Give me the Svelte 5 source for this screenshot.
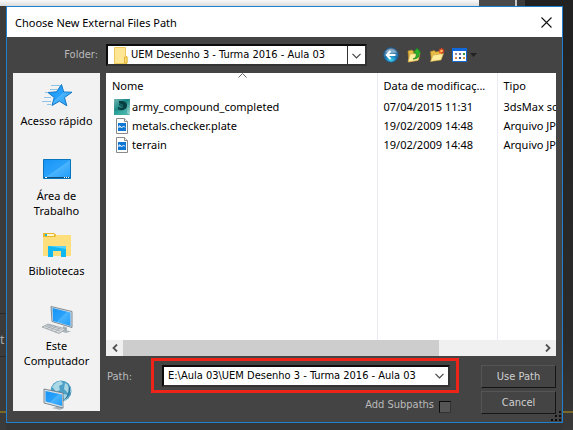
<script>
  const places = [
    { id: 'quick', label: 'Acesso rápido' },
    { id: 'desktop', label: 'Área de Trabalho' },
    { id: 'libraries', label: 'Bibliotecas' },
    { id: 'computer', label: 'Este Computador' },
    { id: 'network', label: '' }
  ];
  const files = [
    { name: 'army_compound_completed', date: '07/04/2015 11:31', type: '3dsMax scene', kind: 'max' },
    { name: 'metals.checker.plate', date: '19/02/2009 14:48', type: 'Arquivo JPG', kind: 'image' },
    { name: 'terrain', date: '19/02/2009 14:48', type: 'Arquivo JPG', kind: 'image' }
  ];
  let path = $state('E:\\Aula 03\\UEM Desenho 3 - Turma 2016 - Aula 03');
  let subpaths = $state(false);
</script>

<div class="desktop">
  <div class="strip"><i class="sheet"></i><i class="bar"></i><i class="edge"></i></div>
  <div class="under left">t</div>
  <div class="under right"></div>

  <div class="dialog" role="dialog" aria-labelledby="title">
    <header>
      <h1 id="title">Choose New External Files Path</h1>
      <button class="close" aria-label="Close">
        <svg width="11" height="11" viewBox="0 0 11 11"><path d="M.5 .5l10 10M10.5 .5l-10 10" stroke="#111" stroke-width="1.1" /></svg>
      </button>
    </header>

    <div class="body">
      <div class="side">
        <label class="folder-label" for="folder">Folder:</label>
        <nav>
          {#each places as place (place.id)}
            <button class="place" aria-label={place.label || place.id}>
              <svg width="32" height="32" viewBox="0 0 32 32" aria-hidden="true">
                <defs>
                  <linearGradient id="g-{place.id}" x1="0" y1="0" x2="1" y2="1">
                    <stop offset="0" stop-color="#1593f5" /><stop offset=".5" stop-color="#2aa2fb" /><stop offset=".52" stop-color="#4ab4ff" /><stop offset="1" stop-color="#1e9bfa" />
                  </linearGradient>
                </defs>
                {#if place.id === 'quick'}
                  <path d="M20.500 5.500l2.200 7.500 8.300.2-7.500 5.300 2.300 8.300-7.300-4.600-7.500 4.300 2.200-8-6.200-5 8.500-.7z" fill="url(#g-quick)" stroke="#1479c9" />
                  <path d="M10 6.500h9M9 10.500h7M4 13.500h3M3 18.500h7M1 22.500h9M6 25.500h4" stroke="#8fc4e6" />
                {:else if place.id === 'desktop'}
                  <path d="M2.500 5.500h27v19h-27z" fill="url(#g-desktop)" stroke="#0875bd" />
                  <path d="M3 23.500h26" stroke="#12517e" />
                  <path d="M4 23.500h2M23 23.500h1M25 23.500h1M27 23.500h1" stroke="#fff" />
                {:else if place.id === 'libraries'}
                  <path d="M2 4h11l2 2h15v21H2z" fill="#fbd765" />
                  <path d="M2 4h11l2 2v3H2z" fill="#e9b82e" />
                  <path d="M4 5h9v2H4z" fill="#fff6d2" /><path d="M4 5h2v2H4z" fill="#16b7d9" />
                  <path d="M2 8h12l2-2h14v21H2z" fill="#ffdf7c" />
                  <path d="M7 17h18v11h-5v-6h-8v6H7z" fill="#10b8f2" />
                  <path d="M7 17h18v3z" fill="#55d2fa" />
                {:else if place.id === 'computer'}
                  <path d="M10 2.500l21 5v16l-20-6z" fill="#d9e0e5" stroke="#64727d" stroke-width=".8" />
                  <path d="M11.500 4L29.500 8.500V22l-17.500-5z" fill="url(#g-computer)" />
                  <path d="M22 22l4 1.500v3l4 1-5 1.500-6-2 3-1z" fill="#aab4bb" />
                  <path d="M1 23l6-3 18 5-7 4.500z" fill="#d6dadd" stroke="#8d969c" stroke-width=".7" />
                  <path d="M4 22l15 5M6 21l15 4.500M6 25l5-4M10 26l5-4M14 28l5-4" stroke="#929ca3" stroke-width=".6" />
                {:else}
                  <circle cx="20" cy="12" r="10.500" fill="#4e9fc5" />
                  <path d="M11 8q4-6 9-6l2 3-4 2 1 4-4 2-2-3zM24 4q6 3 6 9l-3 1-4-4zM22 15l6 1q-2 5-5 6z" fill="#abd8e5" />
                  <path d="M27 5q5 7-1 14l-4 3q8-8 5-17z" fill="#2676a0" />
                  <path d="M14 23l7 2-1 4h3l-4 2-8-2 4-1z" fill="#adb8c0" />
                  <path d="M3 10l19 4v15L3 24z" fill="#dae2e8" stroke="#64727d" stroke-width=".8" />
                  <path d="M4.500 12L21 15.500V27L4.500 22.500z" fill="url(#g-network)" />
                {/if}
              </svg>
              {#if place.label}<span>{place.label}</span>{/if}
            </button>
          {/each}
        </nav>
      </div>

      <div class="main">
        <div class="toolbar">
          <div class="well folder">
            <svg class="folder-icon" width="14" height="17" viewBox="0 0 14 17" aria-hidden="true">
              <path d="M.5 .5h11v9h1.500v7H.5z" fill="#ffe694" stroke="#ecc75a" /><path d="M10.500 10v6h2.500v-6z" fill="#ffdc74" stroke="#e2b63d" />
            </svg>
            <select id="folder"><option>UEM Desenho 3 - Turma 2016 - Aula 03</option></select>
            <svg class="chevron" width="9" height="6" viewBox="0 0 9 6" aria-hidden="true"><path d="M.5 .8l4 4 4-4" fill="none" stroke="#444" stroke-width="1.200" /></svg>
          </div>
          <div class="tools">
            <button aria-label="Back">
              <svg width="16" height="16" viewBox="0 0 16 16">
                <defs><radialGradient id="ball" cx=".5" cy=".85" r=".8"><stop offset="0" stop-color="#3fd3ee" /><stop offset=".5" stop-color="#1975b4" /><stop offset="1" stop-color="#6689a8" /></radialGradient></defs>
                <circle cx="8" cy="8" r="7.300" fill="url(#ball)" stroke="#205782" /><path d="M2.500 5q5-6 11 0-5 3-11 0z" fill="#b4cbdb" opacity=".6" />
                <path d="M12.500 8H4M7.500 4L3.700 8l3.800 4" fill="none" stroke="#fff" stroke-width="2" />
              </svg>
            </button>
            <button aria-label="Up one level">
              <svg width="16" height="16" viewBox="0 0 16 16">
                <path d="M2 4l4-1 1 1.500 6-1v9L3 15z" fill="#e8bd43" stroke="#b8892a" stroke-width=".6" /><path d="M2 15l2-8 10-1-2 7.500z" fill="#ffee9e" stroke="#cba13d" stroke-width=".6" />
                <path d="M7 12q4-1 3-6H7.500L11 1l4 5h-2q1 6-6 6z" fill="#2eb32c" stroke="#187d1c" stroke-width=".7" />
              </svg>
            </button>
            <button aria-label="New folder">
              <svg width="16" height="16" viewBox="0 0 16 16">
                <path d="M1.500 4.500l4-1 1 1.500 6-1v8L2.500 14z" fill="#e8bd43" stroke="#b8892a" stroke-width=".6" /><path d="M1.500 14.500L4 8l10.500-1.500L12 13z" fill="#ffee9e" stroke="#cba13d" stroke-width=".6" />
                <path d="M12.500 1v6M9.500 4h6M10.500 2l4 4M14.500 2l-4 4" stroke="#ec4420" stroke-width="1.100" /><circle cx="12.500" cy="4" r="1.300" fill="#ffc35a" />
              </svg>
            </button>
            <button class="view" aria-label="View menu">
              <svg width="15" height="14" viewBox="0 0 15 14">
                <path d="M.5 .5h14v13H.5z" fill="#fff" stroke="#156bd5" /><path d="M0 0h15v3H0z" fill="#1269dc" />
                <path d="M3 5h2v2H3z" fill="#9689ae" /><path d="M7 5h2v2H7z" fill="#7265a9" /><path d="M11 5h2v2h-2z" fill="#2f9a43" /><path d="M3 9h2v2H3z" fill="#e88351" /><path d="M7 9h2v2H7z" fill="#274e8b" /><path d="M11 9h2v2h-2z" fill="#c79425" />
              </svg>
              <svg width="7" height="4" viewBox="0 0 7 4"><path d="M0 0h7L3.500 4z" fill="#222" /></svg>
            </button>
          </div>
        </div>

        <div class="list">
          <table>
            <colgroup><col class="c-name" /><col class="c-date" /><col /></colgroup>
            <thead>
              <tr><th>Nome</th><th>Data de modificaç...</th><th>Tipo</th></tr>
            </thead>
            <tbody>
              {#each files as file (file.name)}
                <tr>
                  <td>
                    <span class="file">
                      {#if file.kind === 'max'}
                        <svg width="16" height="16" viewBox="0 0 16 16" aria-hidden="true">
                          <defs><linearGradient id="teal" x1="0" y1="0" x2="1" y2="1"><stop offset="0" stop-color="#75b5b3" /><stop offset=".45" stop-color="#178783" /><stop offset="1" stop-color="#b6e3dd" /></linearGradient></defs>
                          <path d="M0 0h16v16H0z" fill="url(#teal)" /><path d="M0 12l9-1 4-2v5l3 2H0z" fill="#31aaa0" opacity=".7" />
                          <path d="M5 2h4q4 1 4 4.500T9 11q-3 1-5-1V8h3V7L5 6z" fill="#073f42" /><path d="M5 4.500l4 2-3 1.500M5 9l4-1" stroke="#2c8583" stroke-width=".7" fill="none" />
                        </svg>
                      {:else}
                        <svg width="16" height="16" viewBox="0 0 16 16" aria-hidden="true">
                          <path d="M2.500 .5h8l3 3v12h-11z" fill="#fff" stroke="#8a8a8a" /><path d="M10.500 .5v3h3" fill="#eee" stroke="#8a8a8a" />
                          <path d="M4 5h8v8H4z" fill="#0f76d4" /><path d="M5 10V8h1l1.500 2L9.500 8 11 9.500" fill="none" stroke="#fff" />
                        </svg>
                      {/if}
                      {file.name}
                    </span>
                  </td>
                  <td>{file.date}</td>
                  <td>{file.type}</td>
                </tr>
              {/each}
              <tr class="rest"><td></td><td></td><td></td></tr>
            </tbody>
          </table>
          <svg class="sort" width="9" height="5" viewBox="0 0 9 5" aria-hidden="true"><path d="M.5 4.500l4-4 4 4" fill="none" stroke="#666" /></svg>
          <div class="scroll">
            <button aria-label="Scroll left"><svg width="6" height="8" viewBox="0 0 6 8"><path d="M5 .5L1.500 4 5 7.500" fill="none" stroke="#505050" stroke-width="1.800" /></svg></button>
            <div class="track"><div class="thumb"></div></div>
            <button aria-label="Scroll right"><svg width="6" height="8" viewBox="0 0 6 8"><path d="M1 .5L4.500 4 1 7.500" fill="none" stroke="#505050" stroke-width="1.800" /></svg></button>
          </div>
        </div>

        <footer>
          <label class="path-label" for="path">Path:</label>
          <div class="center">
            <div class="highlight">
              <div class="well">
                <input id="path" type="text" bind:value={path} />
                <button class="drop" aria-label="Recent paths"><svg width="9" height="6" viewBox="0 0 9 6"><path d="M.5 .8l4 4 4-4" fill="none" stroke="#444" stroke-width="1.200" /></svg></button>
              </div>
            </div>
            <label class="check">Add Subpaths <input type="checkbox" bind:checked={subpaths} /></label>
          </div>
          <div class="actions">
            <button>Use Path</button>
            <button>Cancel</button>
          </div>
        </footer>
      </div>
    </div>
    <svg class="grip" width="11" height="11" viewBox="0 0 11 11" aria-hidden="true">
      <path d="M8 0h2v2H8zM4 4h2v2H4zM8 4h2v2H8zM0 8h2v2H0zM4 8h2v2H4zM8 8h2v2H8z" fill="#0c0c0c" />
    </svg>
  </div>
</div>

<style>
  .desktop {
    --ui: "DejaVu Sans Condensed", "DejaVu Sans", sans-serif;
    --shell: "Noto Sans", "Open Sans", sans-serif;
    position: relative;
    box-sizing: border-box;
    height: 100vh;
    min-height: 320px;
    padding: 6px 10px 7px 6px;
    overflow: hidden;
    background: linear-gradient(#2c2c2c, #363636);
    font: 11px/15px var(--shell);
    color: #000;
  }
  button {
    margin: 0;
    padding: 0;
    border: 0;
    background: none;
    font: inherit;
    color: inherit;
  }
  svg { display: block; flex: none; }
  .strip { position: absolute; inset: 0 0 auto; height: 6px; display: flex; background: #222; }
  .sheet { flex: 0 0 479px; background: linear-gradient(#fafafa, #dcdcdc); }
  .bar { flex: 0 0 36px; background: #4a4a4a; border-right: 2px solid #c8c8c8; }
  .edge { flex: 0 0 8px; background: #3c3c3c; }
  .under { position: absolute; font-size: 12px; color: #aaa; }
  .left {
    left: 0; top: 6px; bottom: 0; width: 6px; box-sizing: border-box; padding-top: 326px;
    background:
      linear-gradient(#7a6829, #7a6829) 0 405px / 100% 2px no-repeat,
      linear-gradient(#2a2a2a, #2a2a2a) 0 307px / 100% 1px no-repeat,
      linear-gradient(#2a2a2a, #2a2a2a) 0 350px / 100% 1px no-repeat,
      #3b3b3b;
  }
  .right {
    right: 0; top: 6px; bottom: 0; width: 10px;
    background: linear-gradient(#7a6829, #7a6829) 0 405px / 100% 2px no-repeat, linear-gradient(#222 30px, #2b2b2b 80%, #393939);
  }
  .dialog {
    position: relative;
    box-sizing: border-box;
    height: 100%;
    display: flex;
    flex-direction: column;
    border: 1px solid #1f80d2;
    background: #444;
  }
  header {
    display: flex;
    align-items: center;
    justify-content: space-between;
    height: 30px;
    padding: 0 10px 0 8px;
    background: #fff;
  }
  h1 { margin: 0; font: 11px/15px var(--shell); }
  .body { flex: 1; min-height: 0; display: flex; gap: 6px; padding: 0 6px; }
  .side { flex: 0 0 87px; min-width: 0; display: flex; flex-direction: column; padding-bottom: 11px; }
  .folder-label, .path-label, .check, .actions, .well { font: 11px/14px var(--ui); color: #bababa; }
  .folder-label { height: 36px; line-height: 36px; text-align: right; padding-right: 2px; box-sizing: border-box; }
  nav { flex: 1; min-height: 0; overflow: hidden; padding-top: 6px; box-sizing: border-box; background: #f2f2f2; }
  .place { display: flex; flex-direction: column; align-items: center; gap: 2px; width: 100%; height: 75px; }
  .place span { width: 76px; }
  .main { flex: 1; min-width: 0; display: flex; flex-direction: column; }
  .toolbar { height: 36px; display: flex; align-items: center; }
  .well {
    position: relative;
    display: flex;
    align-items: stretch;
    height: 22px;
    box-sizing: border-box;
    border: 2px solid;
    border-color: #0c0c0c #333 #333 #0c0c0c;
    background: #fff;
  }
  .folder { flex: 1; min-width: 0; }
  .folder-icon { position: absolute; left: 6px; top: 1px; }
  select {
    appearance: none;
    flex: 1;
    min-width: 0;
    margin: 0;
    padding: 0 20px 0 23px;
    border: 0;
    border-radius: 0;
    font: inherit;
    color: #000;
    background: linear-gradient(#333, #333) right 17px top / 1px 100% no-repeat #fff;
  }
  .chevron { position: absolute; right: 4px; top: 7px; pointer-events: none; }
  .tools { flex: 0 0 173px; padding-left: 16px; display: flex; align-items: center; gap: 7px; }
  .view { display: flex; align-items: center; gap: 3px; }
  .list { position: relative; flex: 1; min-height: 0; display: flex; flex-direction: column; overflow: hidden; background: #fff; }
  table { flex: 1; width: 100%; height: calc(100% - 16px); table-layout: fixed; border-collapse: collapse; }
  .c-name { width: 271px; }
  .c-date { width: 120px; }
  th, td { height: 19px; padding: 0 0 0 6px; font-weight: normal; text-align: left; white-space: nowrap; overflow: hidden; }
  th { height: 24px; }
  th + th, td + td { border-left: 1px solid #e8ebf6; }
  .rest td { height: auto; }
  .file { display: flex; align-items: center; gap: 2px; height: 19px; padding-left: 2px; }
  .sort { position: absolute; left: 132px; top: 0; }
  .scroll { flex: 0 0 16px; display: flex; background: #f0f0f0; }
  .scroll button { flex: 0 0 17px; display: flex; align-items: center; justify-content: center; }
  .track { flex: 1; }
  .thumb { width: 76%; height: 100%; background: #cdcdcd; }
  footer { display: flex; height: 66px; }
  .path-label { flex: 0 0 45px; line-height: 42px; box-sizing: border-box; padding-left: 1px; }
  .center { flex: 1; min-width: 0; margin-right: 22px; padding-top: 2px; }
  .highlight { padding: 4px 6px 3px 8px; border: 3px solid #ee2419; }
  .highlight .well { height: 22px; }
  input[type='text'] { flex: 1; min-width: 0; margin: 0; padding: 0 0 0 4px; border: 0; outline: 0; font: inherit; color: #000; background: #fff; }
  .drop { flex: 0 0 17px; display: flex; align-items: center; justify-content: center; }
  .check { display: flex; align-items: center; justify-content: flex-end; gap: 5px; margin-top: 4px; padding-right: 8px; }
  input[type='checkbox'] {
    appearance: none; width: 12px; height: 12px; margin: 4px 0 0; border: 1px solid; border-color: #0c0c0c #333 #333 #0c0c0c; background: #555;
  }
  .actions { flex: 0 0 75px; display: flex; flex-direction: column; gap: 3px; padding-top: 9px; }
  .actions button { height: 23px; border: 1px solid; border-color: #555 #151515 #151515 #555; color: #d0d0d0; background: #444; }
  .grip { position: absolute; right: 0; bottom: 0; }
</style>
